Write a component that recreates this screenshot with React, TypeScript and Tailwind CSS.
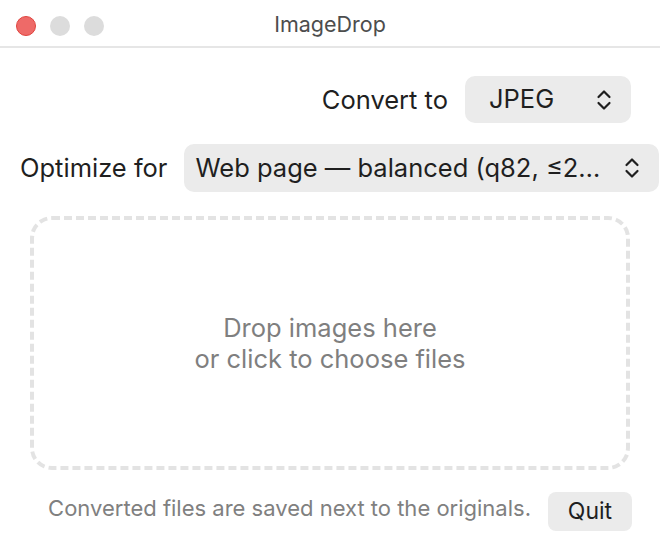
function Chevrons() {
  return (
    <svg width="16" height="22" viewBox="0 0 16 22" fill="none" stroke="#1f1f1f" strokeWidth="2.2" strokeLinecap="round" strokeLinejoin="round">
      <path d="M2.5 8 L8 2.5 L13.5 8" />
      <path d="M2.5 14 L8 19.5 L13.5 14" />
    </svg>
  );
}

function PopupButton({ label, className }: { label: string; className?: string }) {
  return (
    <div className={`flex h-[47px] items-center rounded-[10px] bg-[#ebebeb] pl-[11px] pr-[19px] ${className ?? ""}`}>
      <span className="flex-1 truncate text-[25.5px] text-[#1f1f1f]">{label}</span>
      <Chevrons />
    </div>
  );
}

export default function App() {
  return (
    <div className="h-[560px] w-[660px] overflow-hidden bg-white font-['Inter',sans-serif]">
      {/* title bar */}
      <div className="relative flex h-[48px] items-center justify-center border-b-2 border-[#e6e6e6] pt-[2px]">
        <div className="absolute left-[16px] top-[16px] flex gap-[14px]">
          <span className="h-[20px] w-[20px] rounded-full border border-[#e0443e] bg-[#ee6a68]" />
          <span className="h-[20px] w-[20px] rounded-full bg-[#dcdcdc]" />
          <span className="h-[20px] w-[20px] rounded-full bg-[#dcdcdc]" />
        </div>
        <span className="text-[21.5px] text-[#4d4d4d]">ImageDrop</span>
      </div>

      <div className="mt-[28px] flex items-center justify-end gap-[17px] pr-[29px]">
        <span className="pt-[2px] text-[25.5px] text-[#1f1f1f]">Convert to</span>
        <PopupButton label="JPEG" className="w-[166px] pl-[24px]" />
      </div>

      <div className="mt-[21px] flex items-center gap-[17px] pl-[20px] pr-[1px]">
        <span className="text-[25.5px] text-[#1f1f1f]">Optimize for</span>
        <PopupButton label="Web page — balanced (q82, ≤2…" className="h-[48px] flex-1" />
      </div>

      <div className="mx-[30px] mt-[24px] flex h-[254px] flex-col items-center justify-center rounded-[22px] border-[4px] border-dashed border-[#e3e3e3] text-[25.5px] leading-[31px] text-[#7f7f7f]">
        <span>Drop images here</span>
        <span>or click to choose files</span>
      </div>

      <div className="mt-[22px] flex items-start justify-end gap-[17px] pr-[28px]">
        <span className="text-[22px] text-[#808080]">Converted files are saved next to the originals.</span>
        <button className="h-[39px] w-[84px] rounded-[8px] bg-[#ebebeb] text-[23px] text-[#1f1f1f]">Quit</button>
      </div>
    </div>
  );
}
